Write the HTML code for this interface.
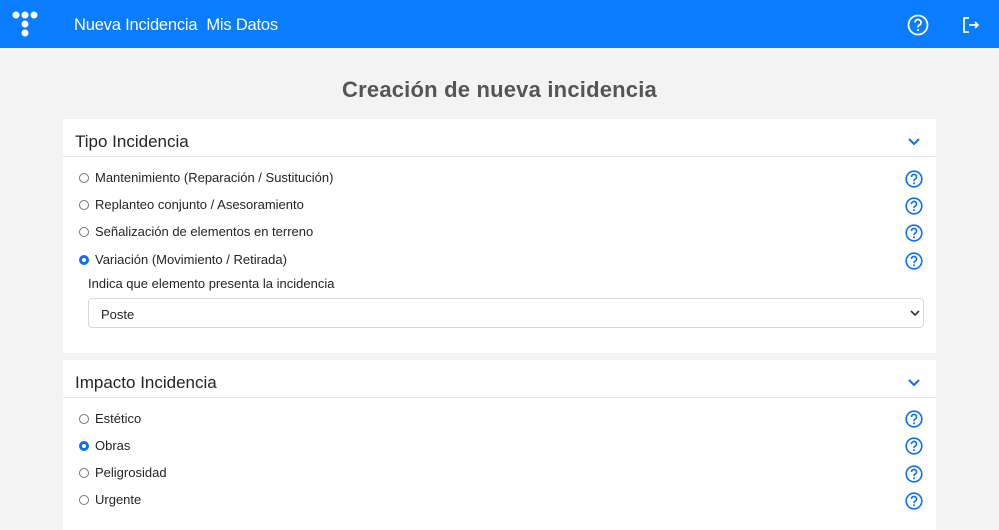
<!DOCTYPE html>
<html><head><meta charset="utf-8"><style>
*{box-sizing:border-box;margin:0;padding:0}
body{width:999px;height:523px;overflow:hidden;background:#f3f3f3;font-family:"Liberation Sans",sans-serif;color:#212529}
.nav{height:48px;background:#0a7cff;position:relative;color:#fff}
.nav .links{position:absolute;left:74px;top:16px;font-size:16.5px;letter-spacing:-0.2px}
.nav .links span{margin-right:9px}
h1{text-align:center;font-size:22px;font-weight:bold;color:#555;position:absolute;top:77px;width:100%;letter-spacing:0.2px}
.card{position:absolute;left:63px;width:873px;background:#fff}
.hd{height:38px;border-bottom:1px solid #e5e5e5;margin:0 0 0 0;position:relative}
.hd span{position:absolute;left:12px;top:13px;font-size:17px}
.hd svg{position:absolute;right:16px;top:19px}
.opt{position:absolute;left:16px;font-size:13px;height:16px;line-height:16px}
.r{display:inline-block;width:10px;height:10px;border:1px solid #777;border-radius:50%;margin-right:6px;vertical-align:-1px}
.r.on{border:3px solid #0a6ef7}
.lbl{position:absolute;left:25px;top:157px;font-size:13px}
.sel{position:absolute;left:25px;top:179px;width:836px;height:30px;border:1px solid #d8d8d8;border-radius:4px;font-size:13px;padding:8px 12px}
.sel svg{position:absolute;right:3px;top:11px}
</style></head><body>
<div class="nav">
<svg width="30" height="30" style="position:absolute;left:12px;top:11px" viewBox="0 0 30 30"><g fill="#fff"><circle cx="4" cy="4" r="3.5"/><circle cx="13" cy="4" r="3.5"/><circle cx="22" cy="4" r="3.5"/><circle cx="13" cy="13" r="3.5"/><circle cx="13" cy="22" r="3.5"/></g></svg>
<div class="links"><span>Nueva Incidencia</span><span>Mis Datos</span></div>
<svg width="22" height="22" viewBox="0 0 22 22" style="position:absolute;left:907px;top:14px"><circle cx="11" cy="11" r="9.5" fill="none" stroke="#fff" stroke-width="1.8"/><path d="M8 8.5a3 3 0 1 1 4 2.8c-.8.4-1 .9-1 1.7v.5" fill="none" stroke="#fff" stroke-width="1.8"/><circle cx="11" cy="16" r="1.1" fill="#fff"/></svg>
<svg width="18" height="18" viewBox="0 0 18 18" style="position:absolute;left:962px;top:16px"><path d="M7 2H2v14h5M7 9h9M13 6l3 3-3 3" fill="none" stroke="#fff" stroke-width="1.8"/></svg>
</div>
<h1>Creación de nueva incidencia</h1>
<div class="card" style="top:119px;height:234px">
<div class="hd"><span>Tipo Incidencia</span><svg width="12" height="8" viewBox="0 0 12 8"><path d="M1 1l5 5 5-5" fill="none" stroke="#0a6ef7" stroke-width="2"/></svg></div>
<div class="opt" style="top:51px"><i class="r"></i>Mantenimiento (Reparación / Sustitución)</div>
<div class="opt" style="top:78px"><i class="r"></i>Replanteo conjunto / Asesoramiento</div>
<div class="opt" style="top:105px"><i class="r"></i>Señalización de elementos en terreno</div>
<div class="opt" style="top:133px"><i class="r on"></i>Variación (Movimiento / Retirada)</div>
<div class="lbl">Indica que elemento presenta la incidencia</div>
<div class="sel">Poste<svg width="10" height="7" viewBox="0 0 10 7"><path d="M1 1l4 4 4-4" fill="none" stroke="#333" stroke-width="1.6"/></svg></div>
</div>
<div class="card" style="top:360px;height:170px">
<div class="hd"><span>Impacto Incidencia</span><svg width="12" height="8" viewBox="0 0 12 8"><path d="M1 1l5 5 5-5" fill="none" stroke="#0a6ef7" stroke-width="2"/></svg></div>
<div class="opt" style="top:51px"><i class="r"></i>Estético</div>
<div class="opt" style="top:78px"><i class="r on"></i>Obras</div>
<div class="opt" style="top:105px"><i class="r"></i>Peligrosidad</div>
<div class="opt" style="top:132px"><i class="r"></i>Urgente</div>
</div>
<svg width="0" height="0" style="position:absolute"><defs><g id="q"><circle cx="9" cy="9" r="7.8" fill="none" stroke="#0a6ef7" stroke-width="1.6"/><path d="M6.5 7a2.5 2.5 0 1 1 3.3 2.3c-.6.3-.8.7-.8 1.4v.4" fill="none" stroke="#0a6ef7" stroke-width="1.6"/><circle cx="9" cy="13.2" r="1" fill="#0a6ef7"/></g></defs></svg>
<svg width="18" height="18" style="position:absolute;left:905px;top:170px"><use href="#q"/></svg>
<svg width="18" height="18" style="position:absolute;left:905px;top:197px"><use href="#q"/></svg>
<svg width="18" height="18" style="position:absolute;left:905px;top:224px"><use href="#q"/></svg>
<svg width="18" height="18" style="position:absolute;left:905px;top:252px"><use href="#q"/></svg>
<svg width="18" height="18" style="position:absolute;left:905px;top:410px"><use href="#q"/></svg>
<svg width="18" height="18" style="position:absolute;left:905px;top:437px"><use href="#q"/></svg>
<svg width="18" height="18" style="position:absolute;left:905px;top:465px"><use href="#q"/></svg>
<svg width="18" height="18" style="position:absolute;left:905px;top:492px"><use href="#q"/></svg>
</body></html>
